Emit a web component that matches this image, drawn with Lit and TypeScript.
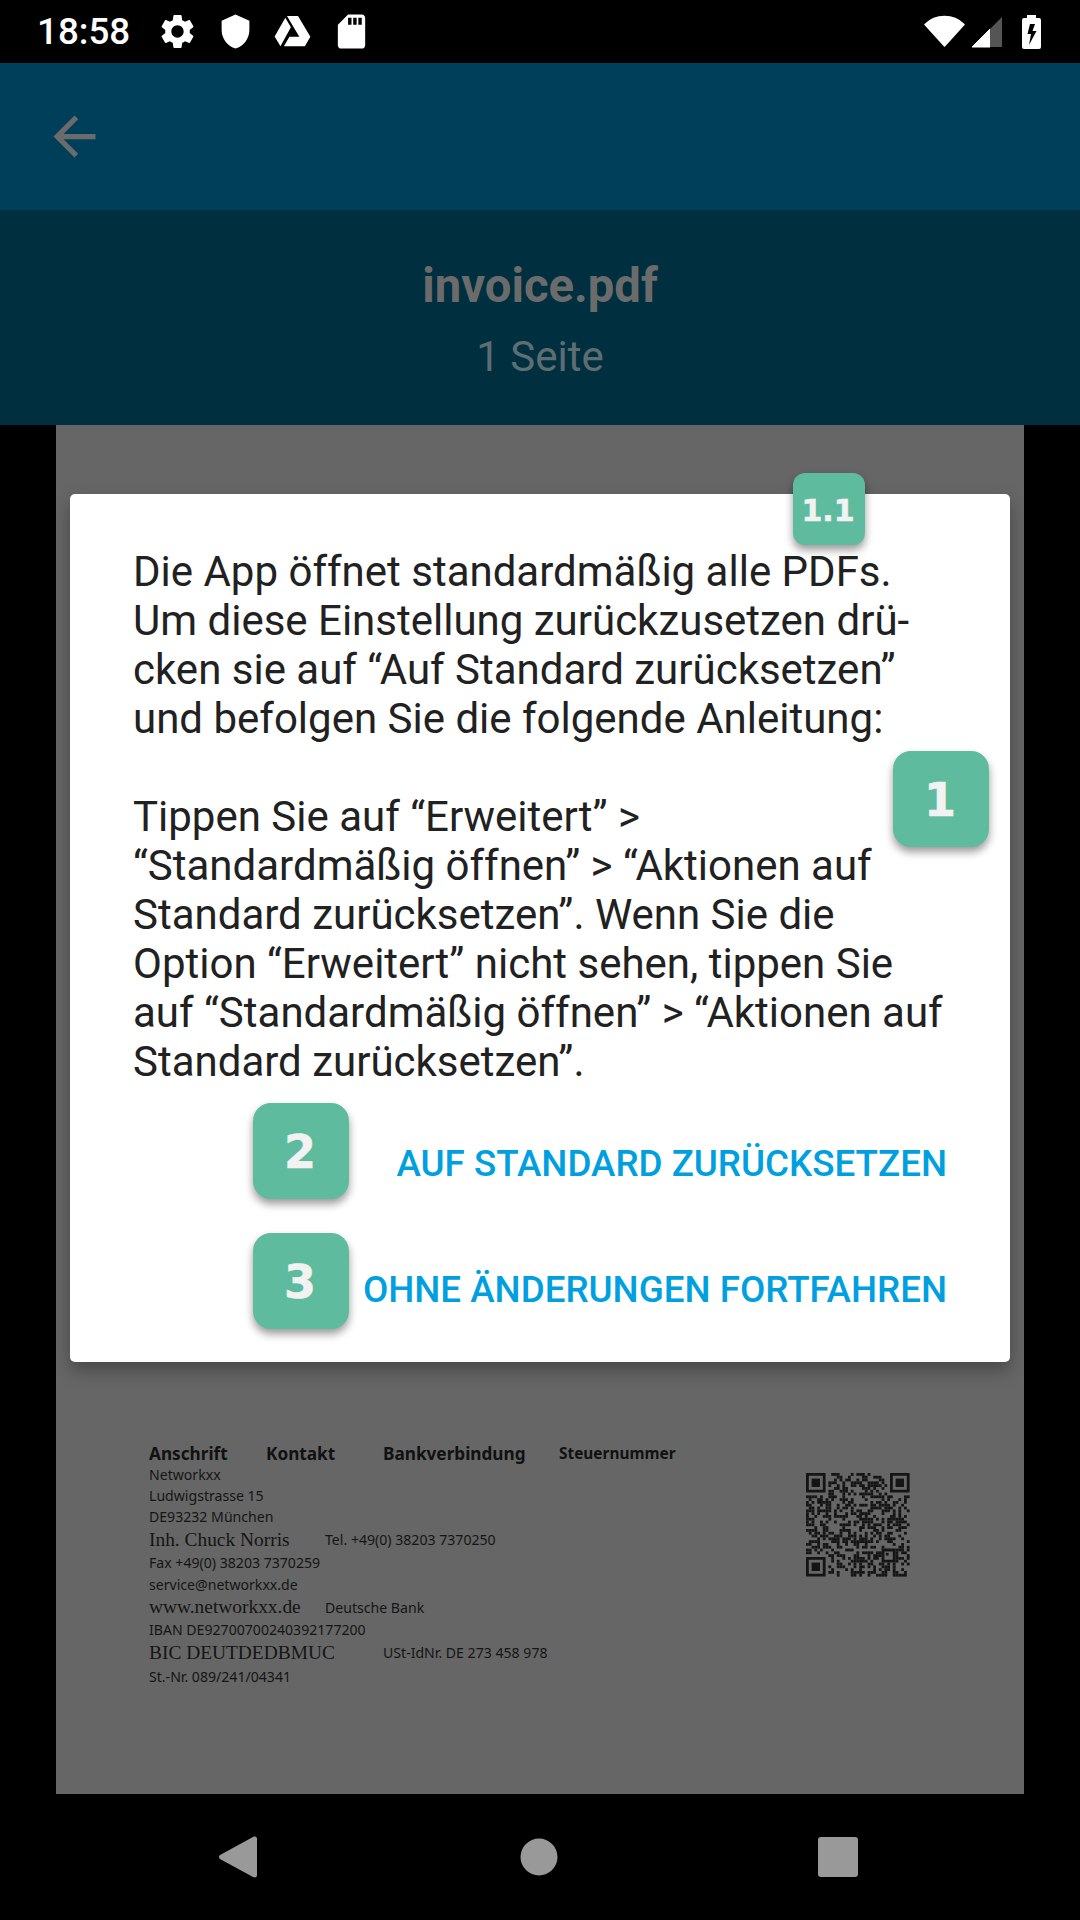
import { LitElement, html, css, svg } from 'lit';
import { customElement } from 'lit/decorators.js';

// invoice footer rows: height, then the four column cells
const ROWS: { h: number; cells: [string, string, string, string]; cls?: string }[] = [
  { h: 22, cells: ['Anschrift', 'Kontakt', 'Bankverbindung', 'Steuernummer'], cls: 'head' },
  { h: 21, cells: ['Networkxx', '', '', ''] },
  { h: 21, cells: ['Ludwigstrasse 15', '', '', ''] },
  { h: 21, cells: ['DE93232 München', '', '', ''] },
];

function qrCells() {
  const n = 37;
  const size = 2.8;
  const out: ReturnType<typeof svg>[] = [];
  let seed = 4711;
  const rnd = () => {
    seed = (seed * 1103515245 + 12345) & 0x7fffffff;
    return (seed >> 12) % 100 / 100;
  };
  const reserved = (x: number, y: number) =>
    (x < 8 && y < 8) ||
    (x >= n - 8 && y < 8) ||
    (x < 8 && y >= n - 8) ||
    (x >= 27 && x < 32 && y >= 27 && y < 32);
  for (let y = 0; y < n; y++) {
    for (let x = 0; x < n; x++) {
      if (!reserved(x, y) && rnd() > 0.5) {
        out.push(svg`<rect x=${x * size} y=${y * size} width=${size} height=${size}></rect>`);
      }
    }
  }
  const square = (fx: number, fy: number, outer: number) => svg`
    <path fill-rule="evenodd" d="M${fx * size} ${fy * size}h${outer * size}v${outer * size}h${-outer * size}zM${(fx + 1) * size} ${(fy + 1) * size}v${(outer - 2) * size}h${(outer - 2) * size}v${-(outer - 2) * size}z"></path>
    <rect x=${(fx + (outer - 3) / 2 + (outer === 5 ? 0.5 : 0)) * size} y=${(fy + (outer - 3) / 2 + (outer === 5 ? 0.5 : 0)) * size}
      width=${(outer === 5 ? 1 : 3) * size} height=${(outer === 5 ? 1 : 3) * size}></rect>`;
  return [...out, square(0, 0, 7), square(n - 7, 0, 7), square(0, n - 7, 7), square(27, 27, 5)];
}

@customElement('app-root')
export class AppRoot extends LitElement {
  static styles = css`
    :host {
      display: block;
      width: 1080px;
      height: 1920px;
      position: relative;
      overflow: hidden;
      background: #000;
      font-family: Roboto, sans-serif;
    }
    .screen {
      height: 1920px;
      display: flex;
      flex-direction: column;
    }
    .status {
      height: 63px;
      flex: none;
      display: flex;
      align-items: center;
      padding: 0 39px 0 37px;
      color: #fff;
      box-sizing: border-box;
    }
    .time {
      font-size: 36.75px;
      font-weight: 500;
      width: 120px;
      line-height: 63px;
    }
    .status svg {
      fill: #fff;
      display: block;
    }
    .left-icons {
      display: flex;
      align-items: center;
      gap: 19px;
    }
    .right-icons {
      margin-left: auto;
      display: flex;
      align-items: center;
      gap: 6px;
    }
    .right-icons .batt {
      margin-left: 13px;
    }
    .toolbar {
      height: 147px;
      flex: none;
      background: #003f5a;
      display: flex;
      align-items: center;
      padding-left: 43px;
    }
    .toolbar svg {
      width: 63px;
      height: 63px;
      fill: #6b6b6b;
      display: block;
    }
    .sub {
      height: 215px;
      flex: none;
      background: #00303f;
      display: flex;
      flex-direction: column;
      align-items: center;
      box-sizing: border-box;
      padding-top: 49px;
    }
    .title {
      font-size: 47.25px;
      font-weight: 700;
      line-height: 54px;
      color: #6b6b6b;
    }
    .pages {
      font-size: 42px;
      line-height: 50px;
      margin-top: 19px;
      color: #5e6d72;
    }
    .page {
      flex: 1;
      margin: 0 56px;
      background: #666;
      display: flex;
      justify-content: space-between;
      padding: 1017px 114px 0 93px;
      box-sizing: border-box;
      color: #151515;
      font-family: 'Noto Sans', sans-serif;
      font-size: 14.1px;
    }
    .rows {
      display: flex;
      flex-direction: column;
    }
    .row {
      display: flex;
      align-items: center;
      white-space: nowrap;
    }
    .row span:nth-child(1) {
      width: 117px;
    }
    .serif {
      font-family: 'Liberation Serif', serif;
      font-size: 19.4px;
    }
    .head {
      font-weight: 700;
      font-size: 17.2px;
      color: #111;
    }
    .head span {
      flex: none;
    }
    .head .k { width: 117px; }
    .head .b { width: 176px; }
    .head .s { font-size: 15.4px; }
    .serif-row { display: flex; align-items: center; white-space: nowrap; }
    .serif-row .serif { flex: none; }
    .qr {
      width: 104px;
      height: 104px;
      margin-top: 31px;
      fill: #151515;
      filter: blur(0.7px);
    }
    .nav {
      height: 126px;
      flex: none;
      position: relative;
      display: flex;
    }
    .nav svg {
      width: 1080px;
      height: 126px;
      fill: #999;
      display: block;
    }
    .dialog {
      position: absolute;
      left: 70px;
      top: 494px;
      width: 940px;
      height: 868px;
      box-sizing: border-box;
      padding: 53px 63px 0;
      background: #fff;
      border-radius: 5px;
      box-shadow: 0 8px 18px rgba(0, 0, 0, 0.3);
    }
    .msg {
      font-size: 42px;
      line-height: 49px;
      color: #212121;
      white-space: nowrap;
    }
    .actions {
      margin-top: 15px;
      display: flex;
      flex-direction: column;
      align-items: flex-end;
      gap: 1px;
    }
    .action {
      height: 125px;
      display: flex;
      align-items: center;
      font-size: 36.75px;
      font-weight: 500;
      color: #00a0e0;
    }
    .badge {
      position: absolute;
      box-sizing: border-box;
      width: 96px;
      height: 96px;
      padding: 2px 2px 0 0;
      border-radius: 18px;
      background: #5fbb9d;
      color: #f2f2f2;
      font-family: 'DejaVu Sans', sans-serif;
      font-weight: 700;
      font-size: 46px;
      -webkit-text-stroke: 0.6px #f2f2f2;
      display: flex;
      align-items: center;
      justify-content: center;
      box-shadow: 0 5px 9px rgba(0, 0, 0, 0.4);
    }
    .b11 { left: 793px; top: 473px; width: 72px; height: 72px; border-radius: 12px; font-size: 30px; }
    .b1 { left: 893px; top: 751px; }
    .b2 { left: 253px; top: 1103px; }
    .b3 { left: 253px; top: 1233px; }
  `;

  render() {
    return html`
      <div class="screen">
        <div class="status">
          <span class="time">18:58</span>
          <div class="left-icons">
            <svg width="41" height="41" viewBox="0 0 24 24"><path d="M19.14 12.94c.04-.3.06-.61.06-.94 0-.32-.02-.64-.07-.94l2.03-1.58c.18-.14.23-.41.12-.61l-1.92-3.32c-.12-.22-.37-.29-.59-.22l-2.39.96c-.5-.38-1.03-.7-1.62-.94l-.36-2.54c-.04-.24-.24-.41-.48-.41h-3.84c-.24 0-.43.17-.47.41l-.36 2.54c-.59.24-1.13.57-1.62.94l-2.39-.96c-.22-.08-.47 0-.59.22L2.74 8.87c-.12.21-.08.47.12.61l2.03 1.58c-.05.3-.09.63-.09.94s.02.64.07.94l-2.03 1.58c-.18.14-.23.41-.12.61l1.92 3.32c.12.22.37.29.59.22l2.39-.96c.5.38 1.03.7 1.62.94l.36 2.54c.05.24.24.41.48.41h3.84c.24 0 .44-.17.47-.41l.36-2.54c.59-.24 1.13-.56 1.62-.94l2.39.96c.22.08.47 0 .59-.22l1.92-3.32c.12-.22.07-.47-.12-.61l-2.01-1.58zM12 15.6c-1.98 0-3.6-1.62-3.6-3.6s1.62-3.6 3.6-3.6 3.6 1.62 3.6 3.6-1.62 3.6-3.6 3.6z"></path></svg>
            <svg width="37" height="37" viewBox="0 0 24 24"><path d="M12 1 3 5v6c0 5.55 3.84 10.74 9 12 5.16-1.26 9-6.45 9-12V5l-9-4z"></path></svg>
            <svg width="39" height="39" viewBox="0 0 24 24"><path d="M8.6 2.5h6.8l7.6 12.7h-6.8zM7.6 3.6 11 9.4 4.6 21 1 15zM6.7 21l3.4-5.8H23L19.6 21z"></path></svg>
            <svg width="41" height="41" viewBox="0 0 24 24"><path d="M18 2h-8L4.02 8 4 20c0 1.1.9 2 2 2h12c1.1 0 2-.9 2-2V4c0-1.1-.9-2-2-2zm-6 6h-2V4h2v4zm3 0h-2V4h2v4zm3 0h-2V4h2v4z"></path></svg>
          </div>
          <div class="right-icons">
            <svg width="41" height="33" viewBox="0 0 41 33"><path d="M20.5 31 1 9.5C6 4.5 13 1.5 20.5 1.5S35 4.5 40 9.5z" stroke="#fff" stroke-width="1.5" stroke-linejoin="round"></path></svg>
            <svg width="32" height="32" viewBox="0 0 32 32"><path d="M1 31 19 13V31z" stroke="#fff" stroke-linejoin="round"></path><path d="M19 13 31 1V31H19z" fill="#555"></path></svg>
            <svg class="batt" width="19" height="34" viewBox="0 0 19 34"><path fill-rule="evenodd" d="M5 0h9v3h3a2 2 0 0 1 2 2v27a2 2 0 0 1-2 2H2a2 2 0 0 1-2-2V5a2 2 0 0 1 2-2h3zM8 9 5.5 19H9L7 30l7.5-14H10.500L13 9z"></path></svg>
          </div>
        </div>
        <div class="toolbar">
          <svg viewBox="0 0 24 24"><path d="M20 11H7.83l5.59-5.59L12 4l-8 8 8 8 1.41-1.41L7.83 13H20v-2z"></path></svg>
        </div>
        <div class="sub">
          <div class="title">invoice.pdf</div>
          <div class="pages">1 Seite</div>
        </div>
        <div class="page">
          <div class="rows">
            ${ROWS.map(
              (r) => html`<div class="row ${r.cls ?? ''}" style="height:${r.h}px">
                <span>${r.cells[0]}</span>
                ${r.cls
                  ? html`<span class="k">${r.cells[1]}</span><span class="b">${r.cells[2]}</span><span class="s">${r.cells[3]}</span>`
                  : ''}
              </div>`
            )}
            <div class="serif-row" style="height:25px">
              <span class="serif" style="width:176px">Inh. Chuck Norris</span><span>Tel. +49(0) 38203 7370250</span>
            </div>
            <div class="row" style="height:21px">Fax +49(0) 38203 7370259</div>
            <div class="row" style="height:22px">service@networkxx.de</div>
            <div class="serif-row" style="height:24px">
              <span class="serif" style="width:176px">www.networkxx.de</span><span>Deutsche Bank</span>
            </div>
            <div class="row" style="height:21px">IBAN DE92700700240392177200</div>
            <div class="serif-row" style="height:25px">
              <span class="serif" style="width:234px">BIC DEUTDEDBMUC</span><span>USt-IdNr. DE 273 458 978</span>
            </div>
            <div class="row" style="height:22px">St.-Nr. 089/241/04341</div>
          </div>
          <svg class="qr" viewBox="0 0 104 104">${qrCells()}</svg>
        </div>
        <div class="nav">
          <svg viewBox="0 0 1080 126">
            <path d="M253 43 220 61c-1.5 1-1.5 3 0 4l33 18c2.5 1 4 0 4-2V45c0-2-1.5-3-4-2z"></path>
            <circle cx="539" cy="63" r="18.5"></circle>
            <rect x="818" y="43" width="40" height="40" rx="3"></rect>
          </svg>
        </div>
      </div>
      <div class="dialog">
        <div class="msg">
          Die App öffnet standardmäßig alle PDFs.<br />
          Um diese Einstellung zurückzusetzen drü-<br />
          cken sie auf “Auf Standard zurücksetzen”<br />
          und befolgen Sie die folgende Anleitung:<br />
          <br />
          Tippen Sie auf “Erweitert” &gt;<br />
          “Standardmäßig öffnen” &gt; “Aktionen auf<br />
          Standard zurücksetzen”. Wenn Sie die<br />
          Option “Erweitert” nicht sehen, tippen Sie<br />
          auf “Standardmäßig öffnen” &gt; “Aktionen auf<br />
          Standard zurücksetzen”.
        </div>
        <div class="actions">
          <div class="action">AUF STANDARD ZURÜCKSETZEN</div>
          <div class="action">OHNE ÄNDERUNGEN FORTFAHREN</div>
        </div>
      </div>
      <div class="badge b11">1.1</div>
      <div class="badge b1">1</div>
      <div class="badge b2">2</div>
      <div class="badge b3">3</div>
    `;
  }
}
